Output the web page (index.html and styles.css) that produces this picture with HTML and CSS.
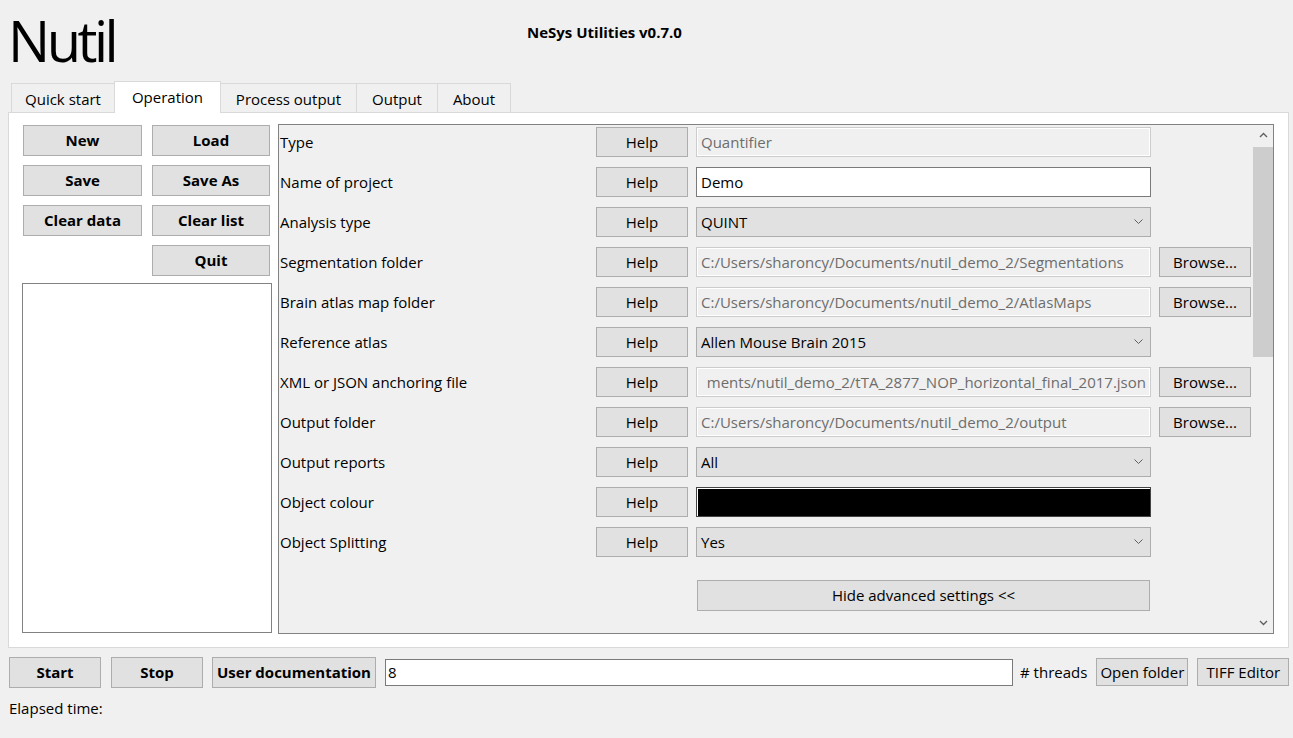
FILE: index.html
```html
<!DOCTYPE html>
<html>
<head>
<meta charset="utf-8">
<link rel="stylesheet" href="styles.css">
</head>
<body>
<div class="header">
  <div class="app-title">Nutil</div>
  <div class="app-version">NeSys Utilities v0.7.0</div>
</div>
<div class="tabs">
  <div class="tab tab-quick">Quick start</div>
  <div class="tab tab-operation active">Operation</div>
  <div class="tab tab-process">Process output</div>
  <div class="tab tab-output">Output</div>
  <div class="tab tab-about">About</div>
</div>
<div class="pane">
  <div class="left-col">
    <div class="btn-grid">
      <button class="btn bold">New</button>
      <button class="btn bold">Load</button>
      <button class="btn bold">Save</button>
      <button class="btn bold">Save As</button>
      <button class="btn bold">Clear data</button>
      <button class="btn bold">Clear list</button>
      <div></div>
      <button class="btn bold">Quit</button>
    </div>
    <div class="listbox"></div>
  </div>
  <div class="scroll-area">
    <div class="form">
      <div class="label">Type</div>
      <button class="btn">Help</button>
      <div class="field disabled">Quantifier</div>
      <div></div>

      <div class="label">Name of project</div>
      <button class="btn">Help</button>
      <div class="field edit">Demo</div>
      <div></div>

      <div class="label">Analysis type</div>
      <button class="btn">Help</button>
      <div class="field combo"><span>QUINT</span><svg class="chev" width="9" height="6" viewBox="0 0 9 6"><polyline points="0.5,0.5 4.5,4.5 8.5,0.5" fill="none" stroke="#606060" stroke-width="1"/></svg></div>
      <div></div>

      <div class="label">Segmentation folder</div>
      <button class="btn">Help</button>
      <div class="field disabled">C:/Users/sharoncy/Documents/nutil_demo_2/Segmentations</div>
      <button class="btn">Browse...</button>

      <div class="label">Brain atlas map folder</div>
      <button class="btn">Help</button>
      <div class="field disabled">C:/Users/sharoncy/Documents/nutil_demo_2/AtlasMaps</div>
      <button class="btn">Browse...</button>

      <div class="label">Reference atlas</div>
      <button class="btn">Help</button>
      <div class="field combo"><span>Allen Mouse Brain 2015</span><svg class="chev" width="9" height="6" viewBox="0 0 9 6"><polyline points="0.5,0.5 4.5,4.5 8.5,0.5" fill="none" stroke="#606060" stroke-width="1"/></svg></div>
      <div></div>

      <div class="label">XML or JSON anchoring file</div>
      <button class="btn">Help</button>
      <div class="field disabled scrolled"><span>ments/nutil_demo_2/tTA_2877_NOP_horizontal_final_2017.json</span></div>
      <button class="btn">Browse...</button>

      <div class="label">Output folder</div>
      <button class="btn">Help</button>
      <div class="field disabled">C:/Users/sharoncy/Documents/nutil_demo_2/output</div>
      <button class="btn">Browse...</button>

      <div class="label">Output reports</div>
      <button class="btn">Help</button>
      <div class="field combo"><span>All</span><svg class="chev" width="9" height="6" viewBox="0 0 9 6"><polyline points="0.5,0.5 4.5,4.5 8.5,0.5" fill="none" stroke="#606060" stroke-width="1"/></svg></div>
      <div></div>

      <div class="label">Object colour</div>
      <button class="btn">Help</button>
      <div class="field colour"></div>
      <div></div>

      <div class="label">Object Splitting</div>
      <button class="btn">Help</button>
      <div class="field combo"><span>Yes</span><svg class="chev" width="9" height="6" viewBox="0 0 9 6"><polyline points="0.5,0.5 4.5,4.5 8.5,0.5" fill="none" stroke="#606060" stroke-width="1"/></svg></div>
      <div></div>

      <div class="spacer"></div>
      <button class="btn hide-btn">Hide advanced settings &lt;&lt;</button>
    </div>
    <div class="scrollbar">
      <svg class="arrow" width="9" height="6" viewBox="0 0 9 6"><polyline points="1,5 4.5,1.5 8,5" fill="none" stroke="#606060" stroke-width="1.4"/></svg>
      <div class="track"><div class="thumb"></div></div>
      <svg class="arrow" width="9" height="6" viewBox="0 0 9 6"><polyline points="1,1 4.5,4.5 8,1" fill="none" stroke="#606060" stroke-width="1.4"/></svg>
    </div>
  </div>
</div>
<div class="bottom-bar">
  <button class="btn bold bottom-btn">Start</button>
  <button class="btn bold bottom-btn">Stop</button>
  <button class="btn bold doc-btn">User documentation</button>
  <div class="field edit threads-input">8</div>
  <div class="threads-label"># threads</div>
  <button class="btn small-btn">Open folder</button>
  <button class="btn small-btn">TIFF Editor</button>
</div>
<div class="elapsed">Elapsed time:</div>
</body>
</html>
```
FILE: styles.css
```css
* { box-sizing: border-box; }
html, body { margin: 0; padding: 0; }
body {
  width: 1293px;
  height: 738px;
  overflow: hidden;
  background: #f0f0f0;
  font-family: "Open Sans", "Noto Sans", sans-serif;
  font-size: 15px;
  color: #000;
}
.header {
  height: 82px;
  display: flex;
  align-items: flex-start;
}
.app-title {
  font-size: 56px;
  line-height: 1;
  padding: 12px 0 0 8px;
  width: 527px;
  letter-spacing: -3.5px;
}
.app-version {
  font-weight: bold;
  font-size: 15px;
  padding-top: 22px;
  white-space: nowrap;
}
.tabs {
  display: flex;
  align-items: flex-end;
  height: 30px;
  padding-left: 11px;
  position: relative;
  z-index: 1;
}
.tab {
  height: 29px;
  padding-top: 2px;
  border: 1px solid #d9d9d9;
  border-bottom: none;
  background: #f0f0f0;
  display: flex;
  align-items: center;
  justify-content: center;
  margin-right: -1px;
  white-space: nowrap;
  line-height: 1;
}
.tab-quick { width: 104px; }
.tab-operation { width: 107px; }
.tab-process { width: 137px; }
.tab-output { width: 82px; }
.tab-about { width: 74px; }
.tab.active {
  height: 32px;
  background: #fff;
  margin-bottom: -1px;
  padding-top: 0;
}
.pane {
  margin: 0 4px 0 8px;
  height: 536px;
  background: #fff;
  border: 1px solid #d9d9d9;
  display: flex;
  padding: 11px 14px 13px 13px;
}
.left-col {
  width: 250px;
  display: flex;
  flex-direction: column;
}
.btn-grid {
  display: grid;
  grid-template-columns: 119px 118px;
  grid-auto-rows: 31px;
  column-gap: 10px;
  row-gap: 9px;
  padding: 1px 0 0 1px;
}
.btn {
  font-family: inherit;
  font-size: 15px;
  color: #000;
  background: #e1e1e1;
  border: 1px solid #adadad;
  padding: 0;
  margin: 0;
  line-height: 1;
  white-space: nowrap;
}
.bold { font-weight: bold; }
.listbox {
  margin-top: 7px;
  height: 350px;
  border: 1px solid #828282;
  background: #fff;
}
.scroll-area {
  margin-left: 6px;
  width: 996px;
  height: 510px;
  border: 1px solid #828282;
  background: #f0f0f0;
  display: flex;
}
.form {
  flex: 1;
  display: grid;
  grid-template-columns: 308px 92px 455px 92px;
  grid-auto-rows: auto;
  column-gap: 8px;
  row-gap: 10px;
  padding: 2px 0 0 1px;
  align-content: start;
}
.form .btn { height: 30px; }
.label {
  height: 30px;
  display: flex;
  align-items: center;
  white-space: nowrap;
}
.field {
  height: 30px;
  display: flex;
  align-items: center;
  padding: 0 4px;
  white-space: nowrap;
  overflow: hidden;
  border: 1px solid #7a7a7a;
}
.field.disabled {
  border-color: #cccccc;
  color: #6d6d6d;
  background: #f0f0f0;
  box-shadow: inset 1px 1px 0 #fff, inset -1px -1px 0 #fff;
}
.field.scrolled { justify-content: flex-end; }
.field.edit { background: #fff; }
.field.combo {
  background: #e1e1e1;
  border-color: #adadad;
  justify-content: space-between;
  padding-right: 7px;
}
.chev { display: block; }
.field.colour {
  background: #000;
  border-color: #444;
  box-shadow: inset 1px 1px 0 #fff;
}
.spacer { grid-column: 1 / -1; height: 3px; }
.form .hide-btn {
  grid-column: 3;
  height: 31px;
  margin-left: 1px;
  margin-right: 1px;
}
.scrollbar {
  width: 20px;
  flex-shrink: 0;
  display: flex;
  flex-direction: column;
  align-items: center;
  background: #f0f0f0;
}
.arrow {
  margin: 7px 0;
  flex-shrink: 0;
}
.track {
  flex: 1;
  width: 100%;
}
.thumb {
  width: 100%;
  height: 210px;
  margin-top: 2px;
  background: #cdcdcd;
}
.bottom-bar {
  display: flex;
  align-items: center;
  height: 32px;
  margin-top: 8px;
  padding-left: 9px;
}
.bottom-btn {
  width: 92px;
  height: 31px;
  margin-right: 10px;
  flex-shrink: 0;
}
.bottom-btn + .bottom-btn { margin-right: 9px; }
.doc-btn {
  width: 164px;
  height: 31px;
  margin-right: 9px;
  flex-shrink: 0;
}
.threads-input {
  width: 628px;
  height: 27px;
  padding: 0 2px;
  flex-shrink: 0;
}
.threads-label {
  margin: 0 9px 0 7px;
  white-space: nowrap;
  flex-shrink: 0;
}
.small-btn {
  width: 92px;
  height: 28px;
  margin-right: 9px;
  flex-shrink: 0;
}
.elapsed {
  padding: 10px 0 0 9px;
}
```
